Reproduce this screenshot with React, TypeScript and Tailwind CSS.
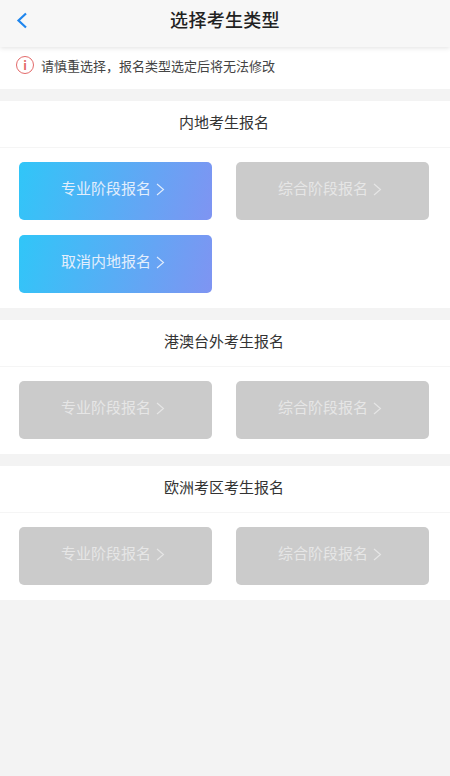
const font = { fontFamily: '"Noto Sans CJK SC", "Noto Sans", sans-serif' };

function RegisterButton({ label, active }: { label: string; active?: boolean }) {
  return (
    <div
      className={
        "flex h-[58px] w-[193px] items-center justify-center rounded-[5px] pr-[5px] pb-[5px] text-[15px] " +
        (active
          ? "bg-[linear-gradient(105deg,#30c6f8,#7f94f2)] text-[#e3eefc]"
          : "bg-[#cbcbcb] text-[#e6e6e6]")
      }
    >
      <span>{label}</span>
      <svg className="ml-[5px] mt-[1px]" width="9" height="13" viewBox="0 0 9 13" fill="none" stroke="currentColor" strokeWidth="1.1">
        <path d="M1 1l6.5 5.5L1 12" />
      </svg>
    </div>
  );
}

function Section({ title, rows }: { title: string; rows: { label: string; active?: boolean }[][] }) {
  return (
    <section className="mt-3 bg-white">
      <h2 className="flex h-[47px] items-center justify-center border-b border-[#f5f5f5] pr-[2px] pb-[4px] text-[15px] font-normal text-[#333]">
        {title}
      </h2>
      <div className="flex flex-col gap-[15px] pt-[14px] pb-[15px] pl-[19px]">
        {rows.map((row, i) => (
          <div key={i} className="flex gap-[24px]">
            {row.map((b) => (
              <RegisterButton key={b.label} label={b.label} active={b.active} />
            ))}
          </div>
        ))}
      </div>
    </section>
  );
}

export default function App() {
  return (
    <div className="h-[776px] w-[450px] overflow-hidden bg-[#f3f3f3]" style={font}>
      <header className="relative flex h-[47px] items-center justify-center bg-[#f7f7f7] pb-[8px] shadow-[0_1px_5px_rgba(0,0,0,0.12)]">
        <svg className="absolute left-[16px] top-[12px]" width="12" height="17" viewBox="0 0 12 17" fill="none" stroke="#1f86ee" strokeWidth="2.2">
          <path d="M10 1.5L2.5 8.5L10 15.5" />
        </svg>
        <h1 className="text-[18px] font-medium tracking-[0.3px] text-[#222]">选择考生类型</h1>
      </header>
      <div className="flex h-[42px] items-center bg-white pb-[6px] pl-[16px]">
        <span className="flex h-[18px] w-[18px] items-center justify-center rounded-full border border-[#e36a6a] text-[12px] font-bold leading-none text-[#e36a6a]">
          i
        </span>
        <span className="ml-[7px] mt-[2px] text-[13px] text-[#444]">请慎重选择，报名类型选定后将无法修改</span>
      </div>
      <Section
        title="内地考生报名"
        rows={[
          [{ label: "专业阶段报名", active: true }, { label: "综合阶段报名" }],
          [{ label: "取消内地报名", active: true }],
        ]}
      />
      <Section title="港澳台外考生报名" rows={[[{ label: "专业阶段报名" }, { label: "综合阶段报名" }]]} />
      <Section title="欧洲考区考生报名" rows={[[{ label: "专业阶段报名" }, { label: "综合阶段报名" }]]} />
    </div>
  );
}
